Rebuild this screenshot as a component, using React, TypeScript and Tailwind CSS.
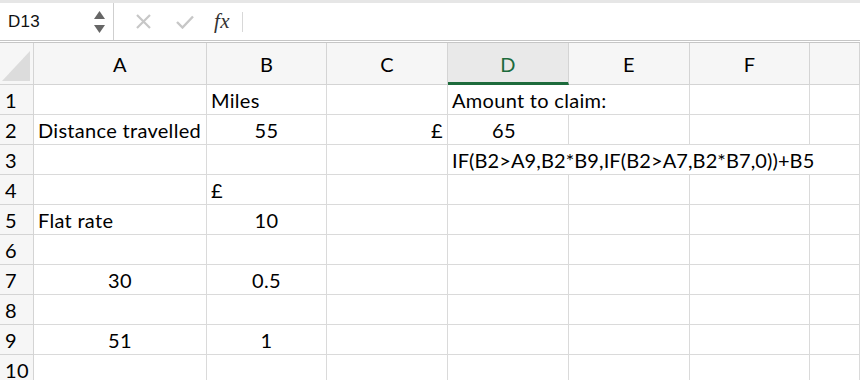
import React from "react";

const cols = "grid grid-cols-[34px_173px_120px_121px_121px_121px_120px_1fr]";
const cell = "h-[30px] border-r border-b border-[#dadada] flex items-center px-[4px] whitespace-nowrap";

type Row = { n: string; cells: React.ReactNode };

const Blank = () => <div className={cell} />;

const Blanks = ({ count }: { count: number }) => (
  <>
    {Array.from({ length: count }).map((_, i) => (
      <Blank key={i} />
    ))}
  </>
);

const rows: Row[] = [
  {
    n: "1",
    cells: (
      <>
        <Blank />
        <div className={cell}>Miles</div>
        <Blank />
        <div className={`${cell} col-span-2`}>Amount to claim:</div>
        <Blanks count={2} />
      </>
    ),
  },
  {
    n: "2",
    cells: (
      <>
        <div className={cell}>Distance travelled</div>
        <div className={`${cell} justify-center`}>55</div>
        <div className={`${cell} justify-end`}>£</div>
        <div className={`${cell} justify-center pr-[12px]`}>65</div>
        <Blanks count={3} />
      </>
    ),
  },
  {
    n: "3",
    cells: (
      <>
        <Blanks count={3} />
        <div className={`${cell} col-span-4 tracking-[0.1px]`}>IF(B2&gt;A9,B2*B9,IF(B2&gt;A7,B2*B7,0))+B5</div>
      </>
    ),
  },
  {
    n: "4",
    cells: (
      <>
        <Blank />
        <div className={cell}>£</div>
        <Blanks count={5} />
      </>
    ),
  },
  {
    n: "5",
    cells: (
      <>
        <div className={cell}>Flat rate</div>
        <div className={`${cell} justify-center`}>10</div>
        <Blanks count={5} />
      </>
    ),
  },
  { n: "6", cells: <Blanks count={7} /> },
  {
    n: "7",
    cells: (
      <>
        <div className={`${cell} justify-center`}>30</div>
        <div className={`${cell} justify-center`}>0.5</div>
        <Blanks count={5} />
      </>
    ),
  },
  { n: "8", cells: <Blanks count={7} /> },
  {
    n: "9",
    cells: (
      <>
        <div className={`${cell} justify-center`}>51</div>
        <div className={`${cell} justify-center`}>1</div>
        <Blanks count={5} />
      </>
    ),
  },
  { n: "10", cells: <Blanks count={7} /> },
];

const FormulaBar = () => (
  <div className="h-[41px] flex border-t-[3px] border-[#e6e6e6] border-b border-b-[#c6c6c6] bg-[#f8f8f8]">
    <div className="w-[114px] flex items-center bg-white border-r border-[#cfcfcf] pl-[8px] pr-[8px] text-[17px] text-[#111] font-['Liberation_Sans',sans-serif]">
      <span className="flex-1">D13</span>
      <div className="flex flex-col gap-[6px]">
        <svg width="11" height="8" viewBox="0 0 11 8"><path d="M5.5 0L11 8H0z" fill="#666" /></svg>
        <svg width="11" height="8" viewBox="0 0 11 8"><path d="M0 0h11L5.5 8z" fill="#666" /></svg>
      </div>
    </div>
    <div className="w-[141px] flex items-center bg-white">
      <svg className="ml-[22px]" width="15" height="15" viewBox="0 0 15 15">
        <path d="M1 1L14 14M14 1L1 14" stroke="#c7c7c7" strokeWidth="2.2" />
      </svg>
      <svg className="ml-[25px]" width="18" height="14" viewBox="0 0 18 14">
        <path d="M1 7l5.5 5.5L17 1.5" stroke="#c7c7c7" strokeWidth="2.4" fill="none" />
      </svg>
      <span className="ml-[20px] text-[21px] italic text-[#333] font-['Liberation_Serif',serif] leading-none">fx</span>
      <div className="ml-[12px] w-px h-[20px] bg-[#d8d8d8]" />
    </div>
    <div className="flex-1 bg-white" />
  </div>
);

const Header = () => (
  <div className={`${cols} h-[43px] border-t border-[#c6c6c6] mt-[1px] bg-[#f6f6f6] text-[20px] text-black`}>
    <div className="relative border-r border-b border-[#d4d4d4]">
      <svg className="absolute left-[2px] top-[8px]" width="29" height="30" viewBox="0 0 29 30">
        <path d="M28 0V30H0z" fill="#dcdcdc" />
      </svg>
    </div>
    {["A", "B", "C", "D", "E", "F", ""].map((c) =>
      c === "D" ? (
        <div key={c} className="flex items-center justify-center bg-[#e9e9e9] border-r border-[#d4d4d4] border-b-[3px] border-b-[#1d6b3c] text-[#1d6b3c] pt-[2px]">
          D
        </div>
      ) : (
        <div key={c || "g"} className="flex items-center justify-center border-r border-b border-[#d4d4d4] pt-[1px]">
          {c}
        </div>
      )
    )}
  </div>
);

export default function App() {
  return (
    <div className="w-[860px] h-[380px] overflow-hidden bg-white font-['Lato','Carlito',sans-serif] tracking-[0.3px]">
      <FormulaBar />
      <Header />
      <div className="text-[20px] text-black">
        {rows.map((r) => (
          <div key={r.n} className={cols}>
            <div className="h-[30px] bg-[#f6f6f6] border-r border-b border-[#d4d4d4] flex items-center pl-[5px]">
              {r.n}
            </div>
            {r.cells}
          </div>
        ))}
      </div>
    </div>
  );
}
